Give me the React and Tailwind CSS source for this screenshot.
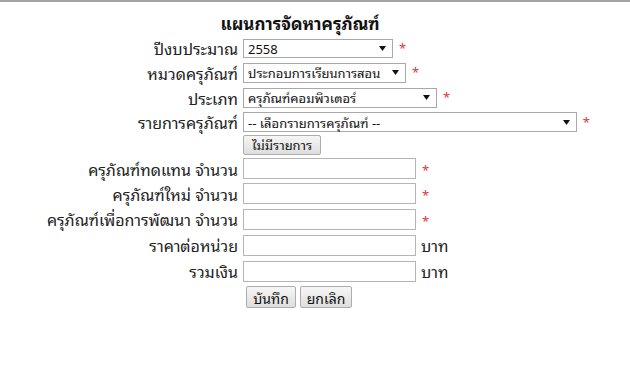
import React from 'react'

const FONT = "font-['Tahoma','Noto_Sans_Thai_Looped','Noto_Sans_Thai','Noto_Sans','DejaVu_Sans',sans-serif]"

const Star = () => <span className="ml-[6px] self-start mt-[5px] text-[13px] leading-none text-[#e3343f]">*</span>

const Arrow = () => (
  <svg width="7" height="5" viewBox="0 0 7 5" className="shrink-0">
    <path d="M0 0h7L3.5 5z" fill="#111" />
  </svg>
)

const FakeSelect = ({ w, h = 'h-[19px]', children }) => (
  <div className={`${w} ${h} flex items-center justify-between border border-[#a9a9a9] bg-white pl-[4px] pr-[6px] text-[13px] leading-none text-[#111]`}>
    <span className="whitespace-nowrap">{children}</span>
    <Arrow />
  </div>
)

const Field = ({ tail }) => (
  <div className="flex items-center">
    <div className="h-[21px] w-[173px] border border-[#b5b5b5] bg-white" />
    {tail === 'star' ? <Star /> : <span className="ml-[5px] text-[16px] text-[#222]">บาท</span>}
  </div>
)

const Row = ({ label, h, children }) => (
  <div className={`grid grid-cols-[203px_347px] ${h}`}>
    <div className="flex items-center justify-end pr-[5px] text-[16px] text-[#222] whitespace-nowrap">{label}</div>
    <div className="flex items-center">{children}</div>
  </div>
)

const Btn = ({ w, h, text, children }) => (
  <button className={`${w} ${h} flex items-center justify-center rounded-[2px] border border-[#adadad] bg-gradient-to-b from-[#f6f6f6] to-[#dedede] text-[#111] ${text}`}>
    {children}
  </button>
)

export default function App() {
  return (
    <div className={`${FONT} min-h-[366px] w-[630px] border-t-2 border-[#a3a3a3] bg-white`}>
      <div className="flex h-[34px] items-center justify-center pt-[7px] pr-[30px] text-[17px] font-bold text-[#111]">แผนการจัดหาครุภัณฑ์</div>
      <div className="mx-auto w-[550px]">
        <Row label="ปีงบประมาณ" h="h-[24px]">
          <FakeSelect w="w-[150px]">2558</FakeSelect>
          <Star />
        </Row>
        <Row label="หมวดครุภัณฑ์" h="h-[25px]">
          <FakeSelect w="w-[163px]" h="h-[20px]">ประกอบการเรียนการสอน</FakeSelect>
          <Star />
        </Row>
        <Row label="ประเภท" h="h-[25px]">
          <FakeSelect w="w-[194px]" h="h-[20px]">ครุภัณฑ์คอมพิวเตอร์</FakeSelect>
          <Star />
        </Row>
        <Row label="รายการครุภัณฑ์" h="h-[23px]">
          <FakeSelect w="w-[336px]" h="h-[20px]">-- เลือกรายการครุภัณฑ์ --</FakeSelect>
          <Star />
        </Row>
        <Row label="" h="h-[23px]">
          <Btn w="w-[78px]" h="h-[20px]" text="text-[13px]">ไม่มีรายการ</Btn>
        </Row>
        <Row label="ครุภัณฑ์ทดแทน จำนวน" h="h-[25px]">
          <Field tail="star" />
        </Row>
        <Row label="ครุภัณฑ์ใหม่ จำนวน" h="h-[25px]">
          <Field tail="star" />
        </Row>
        <Row label="ครุภัณฑ์เพื่อการพัฒนา จำนวน" h="h-[26px]">
          <Field tail="star" />
        </Row>
        <Row label="ราคาต่อหน่วย" h="h-[26px]">
          <Field tail="baht" />
        </Row>
        <Row label="รวมเงิน" h="h-[26px]">
          <Field tail="baht" />
        </Row>
        <Row label="" h="h-[26px]">
          <div className="flex gap-[4px] pl-[3px]">
            <Btn w="w-[50px]" h="h-[22px]" text="text-[14px]">บันทึก</Btn>
            <Btn w="w-[52px]" h="h-[22px]" text="text-[14px]">ยกเลิก</Btn>
          </div>
        </Row>
      </div>
    </div>
  )
}
